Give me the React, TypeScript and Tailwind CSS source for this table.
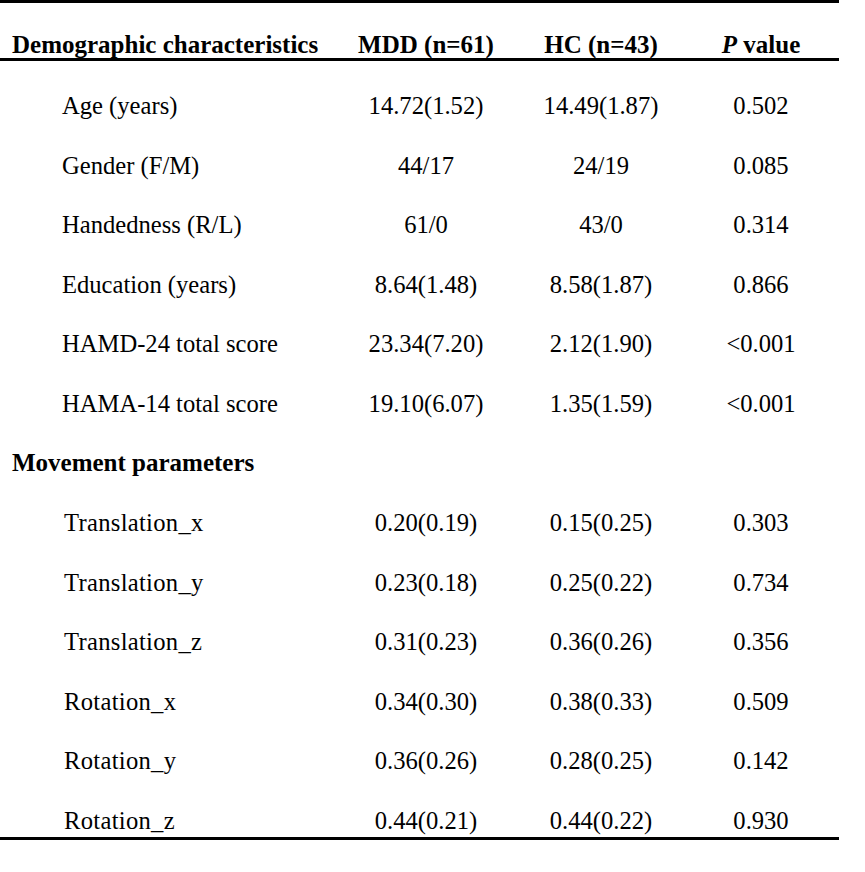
const demographics = [
  { label: 'Age (years)', mdd: '14.72(1.52)', hc: '14.49(1.87)', p: '0.502' },
  { label: 'Gender (F/M)', mdd: '44/17', hc: '24/19', p: '0.085' },
  { label: 'Handedness (R/L)', mdd: '61/0', hc: '43/0', p: '0.314' },
  { label: 'Education (years)', mdd: '8.64(1.48)', hc: '8.58(1.87)', p: '0.866' },
  { label: 'HAMD-24 total score', mdd: '23.34(7.20)', hc: '2.12(1.90)', p: '<0.001' },
  { label: 'HAMA-14 total score', mdd: '19.10(6.07)', hc: '1.35(1.59)', p: '<0.001' },
];

const movement = [
  { label: 'Translation_x', mdd: '0.20(0.19)', hc: '0.15(0.25)', p: '0.303' },
  { label: 'Translation_y', mdd: '0.23(0.18)', hc: '0.25(0.22)', p: '0.734' },
  { label: 'Translation_z', mdd: '0.31(0.23)', hc: '0.36(0.26)', p: '0.356' },
  { label: 'Rotation_x', mdd: '0.34(0.30)', hc: '0.38(0.33)', p: '0.509' },
  { label: 'Rotation_y', mdd: '0.36(0.26)', hc: '0.28(0.25)', p: '0.142' },
  { label: 'Rotation_z', mdd: '0.44(0.21)', hc: '0.44(0.22)', p: '0.930' },
];

type Row = { label: string; mdd: string; hc: string; p: string };

function DataRow({ row, indent, last }: { row: Row; indent: string; last?: boolean }) {
  return (
    <div className={`flex leading-[59.58px] ${last ? 'h-[46px] items-start' : 'h-[59.58px]'}`}>
      <div className={`w-[340px] ${indent}`}>{row.label}</div>
      <div className="w-[172px] text-center">{row.mdd}</div>
      <div className="w-[178px] text-center">{row.hc}</div>
      <div className="w-[142px] text-center">{row.p}</div>
    </div>
  );
}

export default function App() {
  return (
    <div className="min-h-[872px] bg-white text-black font-['Liberation_Serif','Times_New_Roman',serif] text-[24.6px]">
      <div className="w-[839px]">
        {/* Header */}
        <div className="flex h-[61px] border-t-[3px] border-b-[3px] border-black pt-[28px] font-bold text-[25px] leading-[28px]">
          <div className="w-[340px] pl-[12px]">Demographic characteristics</div>
          <div className="w-[172px] text-center">MDD (n=61)</div>
          <div className="w-[178px] text-center">HC (n=43)</div>
          <div className="w-[142px] text-center">
            <span className="italic">P</span> value
          </div>
        </div>

        {/* Body */}
        <div className="pt-[15px] border-b-[3px] border-black">
          {demographics.map((r) => (
            <DataRow key={r.label} row={r} indent="pl-[62px]" />
          ))}
          <div className="h-[59.58px] leading-[59.58px] pl-[12px] font-bold text-[25px]">Movement parameters</div>
          {movement.map((r, i) => (
            <DataRow key={r.label} row={r} indent="pl-[64px] tracking-[0.3px]" last={i === movement.length - 1} />
          ))}
        </div>
      </div>
    </div>
  );
}
